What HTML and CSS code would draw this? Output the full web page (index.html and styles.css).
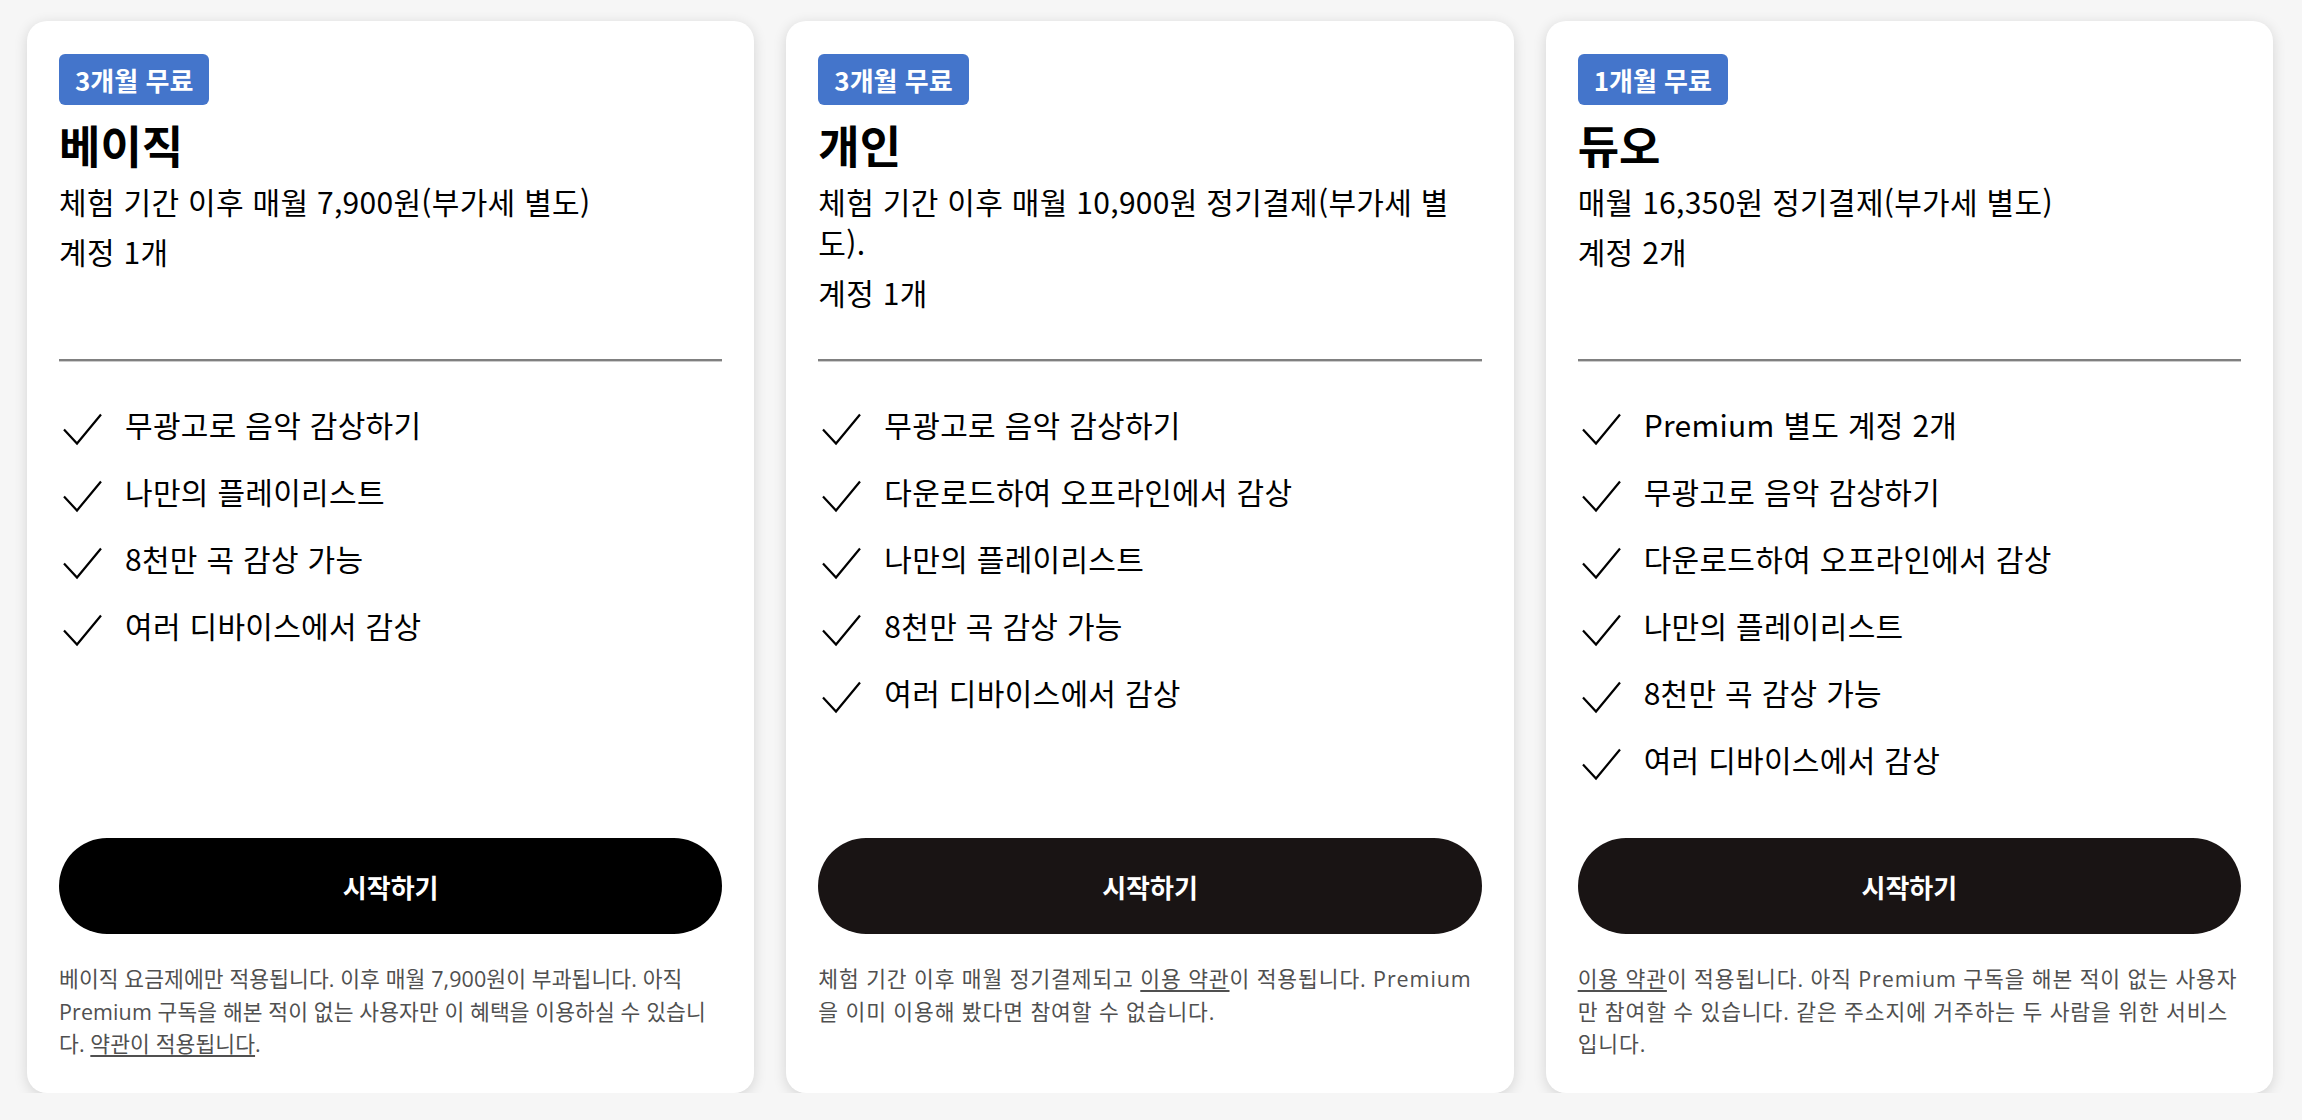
FILE: index.html
```html
<!DOCTYPE html>
<html lang="ko">
<head>
<meta charset="utf-8">
<title>Premium 요금제</title>
<link rel="stylesheet" href="styles.css">
</head>
<body>
<main class="plans">
  <section class="card">
    <div class="head">
      <span class="badge">3개월 무료</span>
      <h2 class="title">베이직</h2>
      <p class="price">체험 기간 이후 매월 7,900원(부가세 별도)</p>
      <p class="accounts">계정 1개</p>
    </div>
    <hr class="divider">
    <ul class="features">
      <li><svg class="check" viewBox="0 0 48 48"><polyline points="5,29.5 18,43.5 42,14.5"/></svg><span>무광고로 음악 감상하기</span></li>
      <li><svg class="check" viewBox="0 0 48 48"><polyline points="5,29.5 18,43.5 42,14.5"/></svg><span>나만의 플레이리스트</span></li>
      <li><svg class="check" viewBox="0 0 48 48"><polyline points="5,29.5 18,43.5 42,14.5"/></svg><span>8천만 곡 감상 가능</span></li>
      <li><svg class="check" viewBox="0 0 48 48"><polyline points="5,29.5 18,43.5 42,14.5"/></svg><span>여러 디바이스에서 감상</span></li>
    </ul>
    <button class="cta cta-black">시작하기</button>
    <p class="terms terms-basic">베이직 요금제에만 적용됩니다. 이후 매월 7,900원이 부과됩니다. 아직 Premium 구독을 해본 적이 없는 사용자만 이 혜택을 이용하실 수 있습니다. <a href="#">약관이 적용됩니다</a>.</p>
  </section>

  <section class="card">
    <div class="head">
      <span class="badge">3개월 무료</span>
      <h2 class="title">개인</h2>
      <p class="price">체험 기간 이후 매월 10,900원 정기결제(부가세 별도).</p>
      <p class="accounts">계정 1개</p>
    </div>
    <hr class="divider">
    <ul class="features">
      <li><svg class="check" viewBox="0 0 48 48"><polyline points="5,29.5 18,43.5 42,14.5"/></svg><span>무광고로 음악 감상하기</span></li>
      <li><svg class="check" viewBox="0 0 48 48"><polyline points="5,29.5 18,43.5 42,14.5"/></svg><span>다운로드하여 오프라인에서 감상</span></li>
      <li><svg class="check" viewBox="0 0 48 48"><polyline points="5,29.5 18,43.5 42,14.5"/></svg><span>나만의 플레이리스트</span></li>
      <li><svg class="check" viewBox="0 0 48 48"><polyline points="5,29.5 18,43.5 42,14.5"/></svg><span>8천만 곡 감상 가능</span></li>
      <li><svg class="check" viewBox="0 0 48 48"><polyline points="5,29.5 18,43.5 42,14.5"/></svg><span>여러 디바이스에서 감상</span></li>
    </ul>
    <button class="cta">시작하기</button>
    <p class="terms">체험 기간 이후 매월 정기결제되고 <a href="#">이용 약관</a>이 적용됩니다. Premium을 이미 이용해 봤다면 참여할 수 없습니다.</p>
  </section>

  <section class="card">
    <div class="head">
      <span class="badge">1개월 무료</span>
      <h2 class="title">듀오</h2>
      <p class="price">매월 16,350원 정기결제(부가세 별도)</p>
      <p class="accounts">계정 2개</p>
    </div>
    <hr class="divider">
    <ul class="features">
      <li><svg class="check" viewBox="0 0 48 48"><polyline points="5,29.5 18,43.5 42,14.5"/></svg><span>Premium 별도 계정 2개</span></li>
      <li><svg class="check" viewBox="0 0 48 48"><polyline points="5,29.5 18,43.5 42,14.5"/></svg><span>무광고로 음악 감상하기</span></li>
      <li><svg class="check" viewBox="0 0 48 48"><polyline points="5,29.5 18,43.5 42,14.5"/></svg><span>다운로드하여 오프라인에서 감상</span></li>
      <li><svg class="check" viewBox="0 0 48 48"><polyline points="5,29.5 18,43.5 42,14.5"/></svg><span>나만의 플레이리스트</span></li>
      <li><svg class="check" viewBox="0 0 48 48"><polyline points="5,29.5 18,43.5 42,14.5"/></svg><span>8천만 곡 감상 가능</span></li>
      <li><svg class="check" viewBox="0 0 48 48"><polyline points="5,29.5 18,43.5 42,14.5"/></svg><span>여러 디바이스에서 감상</span></li>
    </ul>
    <button class="cta">시작하기</button>
    <p class="terms"><a href="#">이용 약관</a>이 적용됩니다. 아직 Premium 구독을 해본 적이 없는 사용자만 참여할 수 있습니다. 같은 주소지에 거주하는 두 사람을 위한 서비스입니다.</p>
  </section>
</main>
</body>
</html>
```

FILE: styles.css
```css
* { box-sizing: border-box; }

html, body {
  margin: 0;
  padding: 0;
  background: #f6f6f6;
}

body {
  font-family: "Noto Sans CJK KR", "Noto Sans", sans-serif;
  color: #000;
}

.plans {
  display: flex;
  gap: 32px;
  padding: 21px 29px 0 27px;
  align-items: stretch;
}

.card {
  flex: 1 1 0;
  min-width: 0;
  background: #fff;
  border-radius: 20px;
  box-shadow: 0 3px 14px rgba(0, 0, 0, 0.14);
  padding: 32px;
  display: flex;
  flex-direction: column;
}

.head {
  height: 306px;
  display: flex;
  flex-direction: column;
  align-items: flex-start;
}

.badge {
  display: inline-block;
  background: #4475cb;
  color: #fff;
  font-weight: 700;
  font-size: 26px;
  line-height: 35px;
  padding: 8px 16px;
  border-radius: 6px;
  margin-top: 1px;
}

.title {
  margin: 12px 0 0;
  font-size: 45px;
  line-height: 56px;
  font-weight: 700;
}

.price {
  margin: 8px 0 0;
  font-size: 30px;
  line-height: 41px;
  letter-spacing: 0.3px;
}

.accounts {
  margin: 9px 0 0;
  font-size: 30px;
  line-height: 41px;
  letter-spacing: 0.3px;
}

.divider {
  margin: 0;
  height: 0;
  border: 0;
  border-top: 2px solid #808080;
  border-bottom: 1px solid #cccccc;
}

.features {
  list-style: none;
  margin: 0;
  padding: 28px 0 46px;
  flex: 1 0 auto;
}

.features li {
  display: flex;
  align-items: center;
  gap: 18px;
  height: 67px;
  font-size: 30px;
  letter-spacing: 0.3px;
}

.check {
  width: 48px;
  height: 48px;
  flex: none;
  fill: none;
  stroke: #000;
  stroke-width: 2.2;
}

.cta {
  display: block;
  width: 100%;
  height: 96px;
  border: 0;
  border-radius: 48px;
  background: #191414;
  color: #fff;
  font-family: inherit;
  font-size: 26px;
  font-weight: 700;
  cursor: pointer;
}

.cta-black {
  background: #000;
}

.terms {
  margin: 29px 0 0;
  min-height: 98px;
  font-family: "Open Sans", "Noto Sans CJK KR", sans-serif;
  font-size: 21.5px;
  line-height: 32.7px;
  letter-spacing: 0.9px;
  color: #505050;
}

.terms-basic {
  letter-spacing: 0.1px;
}

.terms a {
  color: inherit;
  text-decoration: underline;
  text-underline-offset: 3px;
}
```
